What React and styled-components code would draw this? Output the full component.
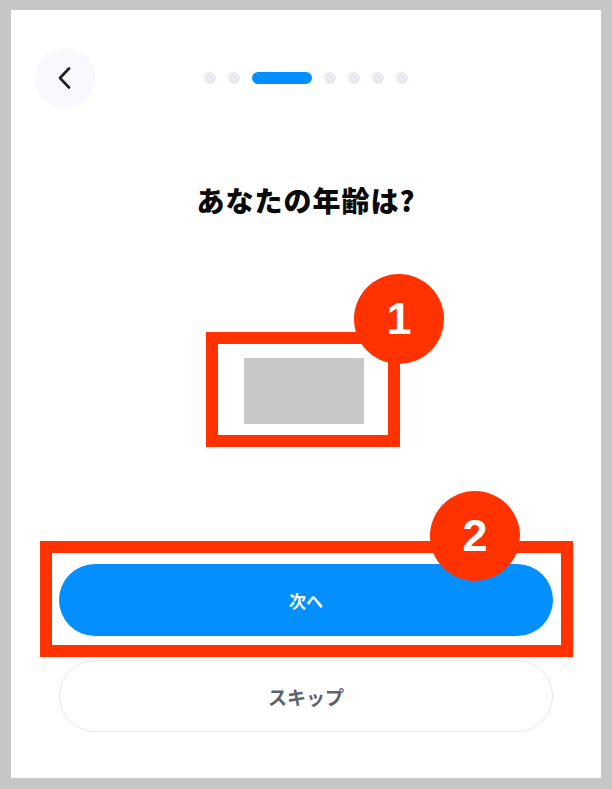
import React from "react";
import styled, { createGlobalStyle } from "styled-components";

const GlobalStyle = createGlobalStyle`
  html, body {
    margin: 0;
    padding: 0;
    background: #c6c6c6;
  }
  body {
    padding: 10px 11px 11px;
    font-family: "Noto Sans CJK JP", "Noto Sans", sans-serif;
  }
`;

const Card = styled.div`
  height: 768px;
  background: #ffffff;
  display: flex;
  flex-direction: column;
  box-sizing: border-box;
  padding: 38px 24px 46px;
`;

const Header = styled.div`
  display: grid;
  grid-template-columns: 60px 1fr 60px;
  align-items: center;
  height: 60px;
`;

const BackButton = styled.button`
  all: unset;
  width: 60px;
  height: 60px;
  border-radius: 50%;
  background: #f8f8fe;
  display: flex;
  align-items: center;
  justify-content: center;
  cursor: pointer;
`;

const Dots = styled.div`
  display: flex;
  justify-content: center;
  align-items: center;
  gap: 12px;
`;

const Dot = styled.span`
  width: ${(p) => (p.$active ? "60px" : "12px")};
  height: 12px;
  border-radius: 6px;
  background: ${(p) => (p.$active ? "#038ffe" : "#e9eaf0")};
`;

const Title = styled.h1`
  margin: 74px 0 0;
  text-align: center;
  font-size: 28px;
  line-height: 36px;
  font-weight: 800;
  color: #0a0a0a;
  letter-spacing: 1px;
`;

const PickerArea = styled.div`
  display: flex;
  justify-content: center;
  margin-top: 140px;
  padding-right: 4px;
`;

const Annotated = styled.div`
  position: relative;
`;

const Placeholder = styled.div`
  width: 120px;
  height: 66px;
  background: #c8c8c8;
`;

const Highlight = styled.div`
  position: absolute;
  top: ${(p) => p.$t}px;
  right: ${(p) => p.$r}px;
  bottom: ${(p) => p.$b}px;
  left: ${(p) => p.$l}px;
  border: 12px solid #ff3200;
  pointer-events: none;
`;

const Badge = styled.div`
  position: absolute;
  top: ${(p) => p.$t}px;
  right: ${(p) => p.$r}px;
  width: 90px;
  height: 90px;
  border-radius: 50%;
  background: #ff3200;
  color: #ffffff;
  display: flex;
  align-items: center;
  justify-content: center;
  font-family: "Liberation Sans", Arial, sans-serif;
  font-weight: 700;
  font-size: 45px;
  z-index: 2;
`;

const Spacer = styled.div`
  flex: 1;
`;

const Footer = styled.div`
  display: flex;
  flex-direction: column;
  gap: 24px;
  padding: 0 24px;
`;

const Button = styled.button`
  all: unset;
  box-sizing: border-box;
  height: 72px;
  border-radius: 36px;
  display: flex;
  align-items: center;
  justify-content: center;
  font-family: "Noto Sans CJK JP", sans-serif;
  font-weight: 700;
  font-size: ${(p) => (p.$primary ? "17px" : "19px")};
  color: ${(p) => (p.$primary ? "#ffffff" : "#5c6170")};
  background: ${(p) => (p.$primary ? "#038ffe" : "#ffffff")};
  border: ${(p) => (p.$primary ? "none" : "1.5px solid #e6e7eb")};
  cursor: pointer;
`;

const FullAnnotated = styled(Annotated)`
  display: flex;
  flex-direction: column;
`;

const ChevronLeft = () => (
  <svg width="14" height="22" viewBox="0 0 14 22" fill="none">
    <path d="M11 1.5 L2 11 L11 20.5" stroke="#1f1f24" strokeWidth="2.6" strokeLinecap="round" strokeLinejoin="round" />
  </svg>
);

export default function App() {
  const steps = [0, 1, 2, 3, 4, 5, 6];
  return (
    <>
      <GlobalStyle />
      <Card>
        <Header>
          <BackButton aria-label="戻る">
            <ChevronLeft />
          </BackButton>
          <Dots>
            {steps.map((s) => (
              <Dot key={s} $active={s === 2} />
            ))}
          </Dots>
          <span />
        </Header>

        <Title>あなたの年齢は?</Title>

        <PickerArea>
          <Annotated>
            <Placeholder />
            <Highlight $t={-26} $r={-36} $b={-23} $l={-38} />
            <Badge $t={-84} $r={-80}>1</Badge>
          </Annotated>
        </PickerArea>

        <Spacer />

        <Footer>
          <FullAnnotated>
            <Button $primary>次へ</Button>
            <Highlight $t={-23} $r={-20} $b={-21} $l={-19} />
            <Badge $t={-73} $r={33}>2</Badge>
          </FullAnnotated>
          <Button>スキップ</Button>
        </Footer>
      </Card>
    </>
  );
}
